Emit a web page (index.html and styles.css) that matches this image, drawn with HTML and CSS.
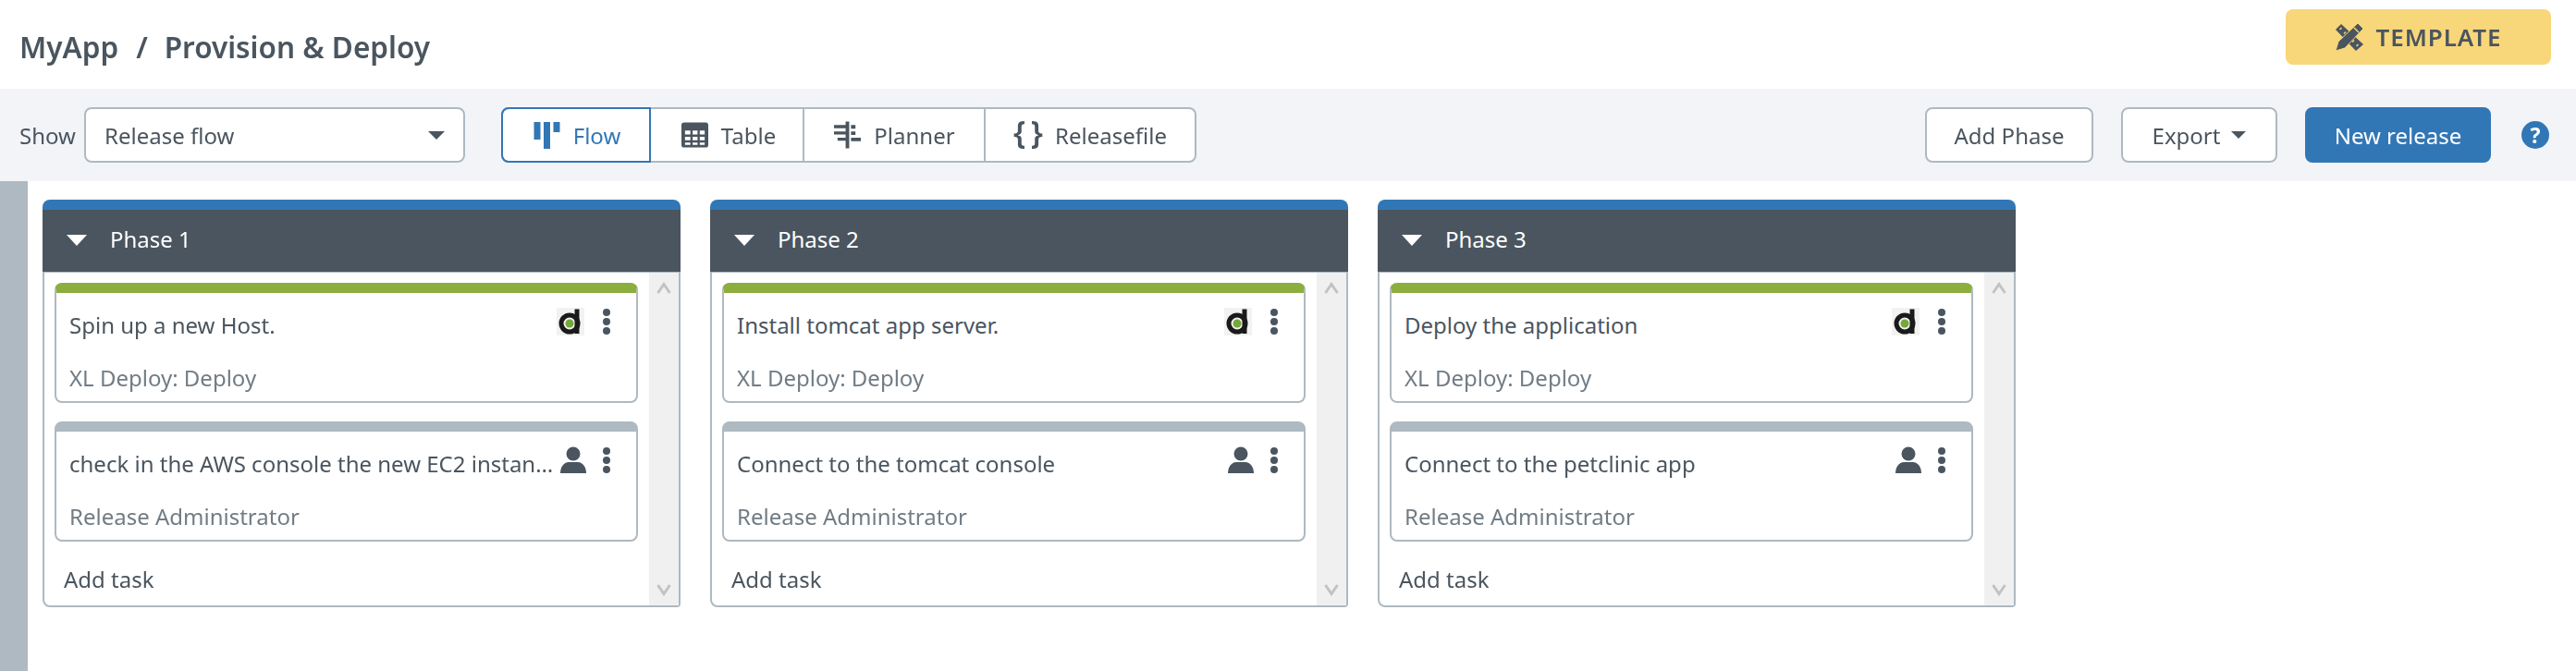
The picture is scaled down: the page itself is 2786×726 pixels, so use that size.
FILE: index.html
```html
<!DOCTYPE html>
<html lang="en">
<head>
<meta charset="utf-8">
<title>Provision &amp; Deploy</title>
<link rel="stylesheet" href="styles.css">
</head>
<body>
<svg class="defs" width="0" height="0" aria-hidden="true">
  <defs>
    <symbol id="i-kebab" viewBox="0 0 10 30"><circle cx="5" cy="5" r="4"/><circle cx="5" cy="15" r="4"/><circle cx="5" cy="25" r="4"/></symbol>
    <symbol id="i-person" viewBox="0 0 30 30"><circle cx="15" cy="8" r="7.5"/><path d="M1 29c0-8 5-12 9-12h10c4 0 9 4 9 12z"/></symbol>
    <symbol id="i-d" viewBox="0 0 30 30"><rect width="30" height="30" fill="#f2f2f2"/><path d="M22 1.500v26.500" stroke="#1a1a1a" stroke-width="5" fill="none"/><circle cx="14" cy="17" r="9" fill="none" stroke="#1a1a1a" stroke-width="5"/><circle cx="14" cy="17" r="4.500" fill="#74a83a"/></symbol>
    <symbol id="i-up" viewBox="0 0 16 14"><path d="M1.500 12 8 2.500 14.500 12" fill="none" stroke-width="3"/></symbol>
    <symbol id="i-down" viewBox="0 0 16 14"><path d="M1.500 2 8 11.500 14.500 2" fill="none" stroke-width="3"/></symbol>
  </defs>
</svg>
<header class="topbar">
  <h1 class="crumbs"><span>MyApp</span><span class="sep">/</span><span>Provision &amp; Deploy</span></h1>
  <div class="badge">
    <svg class="badge-icon" viewBox="0 0 30 30">
      <path d="M6 1 0 7l22 23 8-7z"/>
      <path d="M6.500 5 4.500 7M11 9.500l-2 2M15.500 14l-2 2M20 18.500l-2 2M24.500 23l-2 2" stroke="#f8d67a" stroke-width="1.500" fill="none"/>
      <path d="M24 0 30 6 10 27 0 30l3-10z" stroke="#f8d67a" stroke-width="1"/>
      <path d="M20 5l5 5" stroke="#f8d67a" stroke-width="1.500" fill="none"/>
    </svg>
    <span>TEMPLATE</span>
  </div>
</header>
<section class="toolbar">
  <label class="show">Show</label>
  <div class="select"><span>Release flow</span><i class="caret"></i></div>
  <nav class="views">
    <a class="view view-flow is-active">
      <svg class="view-icon" viewBox="0 0 28 30"><path d="M0 1h7v19H0zM10.500 1h7v29h-7zM21 1h7v11h-7z"/></svg>Flow</a>
    <a class="view view-table">
      <svg class="view-icon" viewBox="0 0 30 30"><path fill-rule="evenodd" d="M3 1h24a3 3 0 0 1 3 3v22a3 3 0 0 1-3 3H3a3 3 0 0 1-3-3V4a3 3 0 0 1 3-3zM4 10v4.500h6V10zm8.500 0v4.500H18V10zM20.500 10v4.500H26V10zM4 17v4h6v-4zm8.500 0v4H18v-4zm8 0v4H26v-4zM4 23.500V26h6v-2.500zm8.500 0V26H18v-2.500zm8 0V26H26v-2.500z"/></svg>Table</a>
    <a class="view view-planner">
      <svg class="view-icon" viewBox="0 0 30 30"><path d="M13 0h4v30h-4zM0 4h13v3.500H0zM0 11h13v3.500H0zM4 18h9v3.500H4zM19 4h5v4h-5zM19 11h5v4h-5zM19 18h11v4H19z"/></svg>Planner</a>
    <a class="view view-file"><span class="braces">{&#8201;}</span>Releasefile</a>
  </nav>
  <div class="actions">
    <button class="btn btn-phase">Add Phase</button>
    <button class="btn btn-export">Export<i class="caret caret-small"></i></button>
    <button class="btn btn-primary">New release</button>
    <span class="help">?</span>
  </div>
</section>
<main class="board">
  <div class="rail"></div>
  <div class="phases">
    <article class="phase">
      <div class="phase-head"><i class="tri"></i><span class="phase-name">Phase 1</span></div>
      <div class="phase-body">
        <div class="tasks">
          <div class="task task-green">
            <div class="task-row"><span class="task-title">Spin up a new Host.</span><svg class="t-icon"><use href="#i-d"/></svg><svg class="kebab"><use href="#i-kebab"/></svg></div>
            <div class="task-sub">XL Deploy: Deploy</div>
          </div>
          <div class="task task-grey">
            <div class="task-row"><span class="task-title">check in the AWS console the new EC2 instance is running</span><svg class="t-icon t-person"><use href="#i-person"/></svg><svg class="kebab kebab-person"><use href="#i-kebab"/></svg></div>
            <div class="task-sub">Release Administrator</div>
          </div>
          <div class="add-task">Add task</div>
        </div>
        <div class="scroll"><svg class="arrow"><use href="#i-up"/></svg><svg class="arrow"><use href="#i-down"/></svg></div>
      </div>
    </article>
    <article class="phase">
      <div class="phase-head"><i class="tri"></i><span class="phase-name">Phase 2</span></div>
      <div class="phase-body">
        <div class="tasks">
          <div class="task task-green">
            <div class="task-row"><span class="task-title">Install tomcat app server.</span><svg class="t-icon"><use href="#i-d"/></svg><svg class="kebab"><use href="#i-kebab"/></svg></div>
            <div class="task-sub">XL Deploy: Deploy</div>
          </div>
          <div class="task task-grey">
            <div class="task-row"><span class="task-title">Connect to the tomcat console</span><svg class="t-icon t-person"><use href="#i-person"/></svg><svg class="kebab kebab-person"><use href="#i-kebab"/></svg></div>
            <div class="task-sub">Release Administrator</div>
          </div>
          <div class="add-task">Add task</div>
        </div>
        <div class="scroll"><svg class="arrow"><use href="#i-up"/></svg><svg class="arrow"><use href="#i-down"/></svg></div>
      </div>
    </article>
    <article class="phase">
      <div class="phase-head"><i class="tri"></i><span class="phase-name">Phase 3</span></div>
      <div class="phase-body">
        <div class="tasks">
          <div class="task task-green">
            <div class="task-row"><span class="task-title">Deploy the application</span><svg class="t-icon"><use href="#i-d"/></svg><svg class="kebab"><use href="#i-kebab"/></svg></div>
            <div class="task-sub">XL Deploy: Deploy</div>
          </div>
          <div class="task task-grey">
            <div class="task-row"><span class="task-title">Connect to the petclinic app</span><svg class="t-icon t-person"><use href="#i-person"/></svg><svg class="kebab kebab-person"><use href="#i-kebab"/></svg></div>
            <div class="task-sub">Release Administrator</div>
          </div>
          <div class="add-task">Add task</div>
        </div>
        <div class="scroll"><svg class="arrow"><use href="#i-up"/></svg><svg class="arrow"><use href="#i-down"/></svg></div>
      </div>
    </article>
  </div>
</main>
</body>
</html>
```
FILE: styles.css
```css
* { box-sizing: border-box; }
html, body { margin: 0; padding: 0; height: 100%; }
body {
  background: #fff;
  color: #4a555f;
  font-family: "Noto Sans", "Open Sans", sans-serif;
  font-size: 24px;
  overflow: hidden;
  filter: blur(0.45px);
}
.defs { position: absolute; }

.topbar {
  height: 96px;
  display: flex;
  align-items: flex-start;
  justify-content: space-between;
  padding: 10px 27px 0 21px;
}
.crumbs {
  margin: 0;
  padding-top: 20px;
  font-size: 31.5px;
  font-weight: 600;
  line-height: 41px;
  display: flex;
  color: #4a555f;
}
.sep { margin: 0 18px 0 19px; }
.badge {
  width: 287px;
  height: 60px;
  background: #f8d67a;
  border-radius: 8px;
  display: flex;
  align-items: center;
  justify-content: center;
  gap: 14px;
  font-size: 26px;
  font-weight: 600;
  letter-spacing: 0.9px;
}
.badge-icon { width: 30px; height: 30px; fill: #4a555f; }

.toolbar {
  height: 100px;
  background: #f3f4f8;
  display: flex;
  align-items: center;
  padding: 0 29px 0 21px;
}
.show { width: 70px; }
.select {
  width: 412px;
  height: 60px;
  background: #fff;
  border: 2px solid #aeb9c1;
  border-radius: 8px;
  display: flex;
  align-items: center;
  justify-content: space-between;
  padding: 0 20px;
}
.caret {
  width: 0;
  height: 0;
  border-left: 9px solid transparent;
  border-right: 9px solid transparent;
  border-top: 9px solid #4a555f;
}
.views {
  margin-left: 39px;
  height: 60px;
  width: 752px;
  display: flex;
  background: #fff;
  border: 2px solid #aeb9c1;
  border-radius: 8px;
}
.view {
  display: flex;
  align-items: center;
  justify-content: center;
  gap: 14px;
  border-right: 2px solid #aeb9c1;
  white-space: nowrap;
}
.view-flow { width: 162px; padding-left: 2px; }
.view-table { width: 166px; padding-left: 4px; }
.view-planner { width: 196px; padding-left: 1px; }
.view-file { flex: 1; border-right: 0; gap: 13px; }
.is-active {
  color: #3277b5;
  border: 2px solid #3277b5;
  border-radius: 8px 0 0 8px;
  margin: -2px 0 -2px -2px;
}
.view-icon { width: 29px; height: 30px; fill: #4a555f; }
.is-active .view-icon { fill: #3277b5; }
.braces { font-size: 34px; line-height: 1; font-weight: 600; padding-bottom: 6px; }

.actions {
  margin-left: auto;
  display: flex;
  align-items: center;
}
.btn {
  font: inherit;
  color: inherit;
  height: 60px;
  background: #fff;
  border: 2px solid #aeb9c1;
  border-radius: 8px;
  padding: 0;
  display: flex;
  align-items: center;
  justify-content: center;
}
.btn-phase { width: 182px; }
.btn-export { width: 169px; margin-left: 30px; gap: 12px; }
.btn-primary {
  width: 201px;
  margin-left: 30px;
  background: #3277b5;
  border-color: #3277b5;
  color: #fff;
}
.caret-small { border-width: 8px 8px 0; border-top-color: #4a555f; border-left-color: transparent; border-right-color: transparent; border-style: solid; }
.help {
  margin-left: 33px;
  width: 30px;
  height: 30px;
  border-radius: 50%;
  background: #3277b5;
  color: #fff;
  font-size: 23px;
  font-weight: 700;
  line-height: 30px;
  text-align: center;
}

.board { display: flex; height: 530px; }
.rail { width: 30px; background: #aeb9c1; }
.phases {
  display: flex;
  align-items: flex-start;
  gap: 32px;
  padding: 20px 0 0 16px;
}
.phase {
  width: 690px;
  height: 441px;
  display: flex;
  flex-direction: column;
  border-top: 11px solid #3277b5;
  border-radius: 8px 8px 4px 4px;
}
.phase-head {
  height: 67px;
  flex: none;
  background: #4a555f;
  color: #fff;
  display: flex;
  align-items: center;
  gap: 25px;
  padding: 0 0 2px 26px;
}
.phase-name { padding-bottom: 2px; }
.tri {
  width: 0;
  height: 0;
  border-left: 11px solid transparent;
  border-right: 11px solid transparent;
  border-top: 12px solid #fff;
}
.phase-body {
  flex: 1;
  min-height: 0;
  display: flex;
  border: 2px solid #aeb9c1;
  border-top-width: 1px;
  border-radius: 0 0 4px 8px;
}
.tasks {
  flex: 1;
  min-width: 0;
  padding: 11px 12px 0 11px;
}
.task {
  height: 130px;
  background: #fff;
  border: 2px solid #aeb9c1;
  border-radius: 8px;
  padding: 18px 14px 0 14px;
}
.task-green { border-top: 11px solid #8bae3f; }
.task-grey { border-top: 11px solid #aeb9c1; margin-top: 20px; }
.task-row {
  display: flex;
  align-items: center;
  height: 32px;
}
.task-title {
  flex: 1;
  min-width: 0;
  white-space: nowrap;
  overflow: hidden;
  text-overflow: ellipsis;
  padding-right: 1px;
}
.t-icon { width: 30px; height: 30px; flex: none; margin-top: -6px; }
.t-person { fill: #4a555f; margin-left: 3px; }
.kebab {
  width: 10px;
  height: 30px;
  flex: none;
  fill: #4a555f;
  margin: -6px 13px 0 19px;
}
.kebab-person { margin-left: 16px; }
.task-sub { margin-top: 25px; color: #717c85; }
.add-task { margin-top: 24px; margin-left: 10px; }
.scroll {
  width: 32px;
  flex: none;
  background: #f0f0f0;
  display: flex;
  flex-direction: column;
  align-items: center;
  justify-content: space-between;
  padding: 10px 0;
}
.arrow { width: 16px; height: 14px; stroke: #c2c2c2; }
```
